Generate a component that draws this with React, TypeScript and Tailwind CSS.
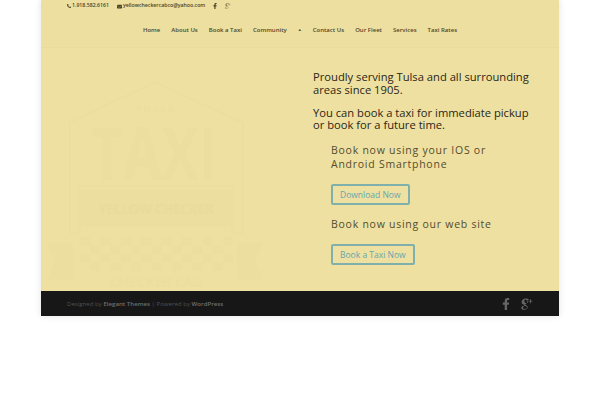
import { FaFacebookF, FaPhoneAlt, FaEnvelope } from "react-icons/fa";

const nav = ["Home", "About Us", "Book a Taxi", "Community"];
const nav2 = ["Contact Us", "Our Fleet", "Services", "Taxi Rates"];

function GPlus({ className }: { className: string }) {
  return (
    <svg viewBox="0 0 20 20" className={className} fill="currentColor" aria-hidden="true">
      <path d="M8 1c2.6 0 4.4.5 5.4 1.2l-1.7 1h-1.5c.9.6 1.4 1.6 1.4 2.8 0 2.2-1.8 3.7-3.7 3.8-.9.6-.8 1.3 0 1.8 1.7 1.1 3.4 2 3.4 4 0 2.500-2.800 3.900-5.800 3.900-2.800 0-5-1.100-5-3 0-2.200 2.500-3.500 5.300-3.500-.6-.7-.7-1.300-.3-2C3.200 10.800 1 9.300 1 6.600 1 3.200 4.400 1 8 1zm-.4 1.300c-1.500 0-2.300 1.200-2 3.200.3 1.900 1.300 3.300 2.800 3.300 1.400 0 2.200-1.300 1.900-3.100C10 4 9.100 2.300 7.600 2.300zM7 13.200c-2 0-3.700 1-3.700 2.500 0 1.600 1.600 2.600 3.500 2.600 2.200 0 3.500-1 3.500-2.400 0-1.300-1.100-2-3.300-2.700zM15 2h1.400v2.600H19V6h-2.600v2.600H15V6h-2.600V4.600H15z" />
    </svg>
  );
}

function Logo() {
  const checks = [];
  for (let r = 0; r < 4; r++) {
    for (let c = 0; c < 15; c++) {
      if ((r + c) % 2 === 0) checks.push(<rect key={`${r}-${c}`} x={40 + c * 10.2} y={177 + r * 8.5} width={10.2} height={8.5} />);
    }
  }
  return (
    <svg viewBox="1 -12 272 243" width={272} height={243} className="absolute left-0 top-0" aria-hidden="true">
      <g fill="#ebde9e">
        <path d="M7 183h26v37H7l8-18zM197 183h26l-8 18 8 19h-26z" />
        <rect x="40" y="130" width="153" height="37" />
        {checks}
      </g>
      <path d="M28 63L115 22L203 63V173H192V126H40V173H30V63" fill="none" stroke="#ebde9e" strokeWidth="2" />
      <text x="115" y="52" textAnchor="middle" fill="#ebde9e" fontFamily="Open Sans" fontWeight="700" fontSize="9" textLength="38">TULSA</text>
      <text x="114" y="120" textAnchor="middle" fill="#ebde9e" fontFamily="Open Sans" fontWeight="700" fontSize="74" textLength="127" lengthAdjust="spacingAndGlyphs">TAXI</text>
      <text x="116" y="154" textAnchor="middle" fill="#e9dc9b" fontFamily="Open Sans" fontWeight="700" fontSize="14" textLength="115">YELLOW CHECKER</text>
      <text x="116" y="227" textAnchor="middle" fill="#ebde9e" fontFamily="Open Sans" fontWeight="700" fontSize="14" textLength="93">CHECKER CAB</text>
    </svg>
  );
}

export default function App() {
  return (
    <div className="min-h-[400px] bg-white font-['Open_Sans',sans-serif]">
      <div className="ml-[41px] w-[518px] shadow-[0_0_7px_rgba(0,0,0,0.12)]">
        <header className="flex h-[48px] flex-col border-b border-[#e8db9b] bg-[#ecdfa0]">
          <div className="flex h-[12px] items-center pl-[26px] text-[5.2px] font-semibold leading-none text-[#4a4224]">
            <FaPhoneAlt className="mr-[1px] size-[4px]" />
            <span>1.918.582.6161</span>
            <FaEnvelope className="ml-[8px] mr-[1px] size-[5px]" />
            <span>yellowcheckercabco@yahoo.com</span>
            <FaFacebookF className="ml-[7px] size-[6px]" />
            <GPlus className="ml-[7px] size-[6px] opacity-60" />
          </div>
          <nav className="mt-[12px] flex items-center justify-center gap-[11px] text-[6px] font-semibold leading-[12px] text-[#50472a]">
            {nav.map((n) => <span key={n}>{n}</span>)}
            <span className="text-[4px]">▲</span>
            {nav2.map((n) => <span key={n}>{n}</span>)}
          </nav>
        </header>
        <main className="flex h-[243px] bg-[#eee0a1]">
          <div className="relative w-[272px] shrink-0 overflow-hidden">
            <Logo />
          </div>
          <div className="flex-1 pt-[23px] text-[11.2px] leading-[12.5px] text-[#2b2616]">
            <p>Proudly serving Tulsa and all surrounding<br />areas since 1905.</p>
            <p className="mt-[10.5px]">You can book a taxi for immediate pickup<br />or book for a future time.</p>
            <div className="ml-[18px] mt-[11px] text-[#554c2c]">
              <h2 className="text-[10.5px] leading-[14px] tracking-[0.75px]">Book now using your IOS or<br />Android Smartphone</h2>
              <a className="mt-[13px] block h-[21px] w-fit rounded-[2px] border-2 border-[#7fb0ac] px-[7px] text-[8.5px] leading-[17px] text-[#66a6ae]">Download Now</a>
              <h2 className="mt-[12px] text-[10.5px] leading-[14px] tracking-[0.75px]">Book now using our web site</h2>
              <a className="mt-[13px] block h-[21px] w-fit rounded-[2px] border-2 border-[#7fb0ac] px-[7px] text-[8.5px] leading-[17px] text-[#66a6ae]">Book a Taxi Now</a>
            </div>
          </div>
        </main>
        <footer className="flex h-[25px] items-center justify-between bg-[#171717] pl-[26px] pr-[26px] text-[6.1px] text-[#505050]">
          <span>Designed by <b className="font-semibold text-[#6f6f6f]">Elegant Themes</b> | Powered by <b className="font-semibold text-[#6f6f6f]">WordPress</b></span>
          <span className="flex items-center gap-[11px] text-[#666]">
            <FaFacebookF className="h-[12px] w-[8px]" />
            <GPlus className="size-[12px]" />
          </span>
        </footer>
      </div>
    </div>
  );
}
